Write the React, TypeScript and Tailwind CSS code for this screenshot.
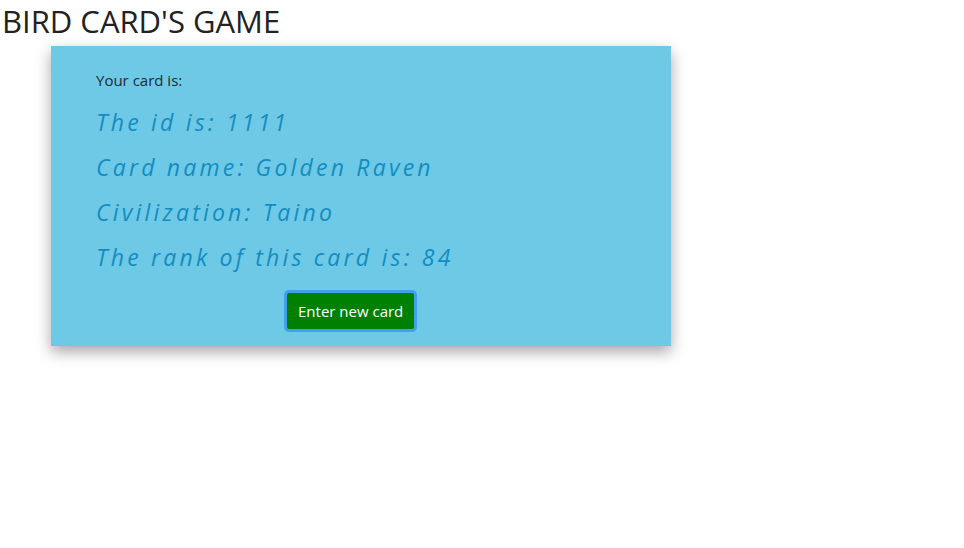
export default function App() {
  const lines = [
    "The id is: 1111",
    "Card name: Golden Raven",
    "Civilization: Taino",
    "The rank of this card is: 84",
  ];

  return (
    <div className="min-h-[548px] bg-white font-['Open_Sans',sans-serif] text-[#222]">
      <h1 className="pl-[2px] text-[31px] leading-[42px] tracking-[0px] text-[#222]">BIRD CARD'S GAME</h1>
      <div className="ml-[51px] mt-[4px] h-[300px] w-[620px] bg-[#6ec9e7] pl-[45px] pt-[22px] shadow-[0_6px_14px_rgba(0,0,0,0.35)]">
        <p className="text-[15px] leading-[24px] text-[#1d2b33]">Your card is:</p>
        <div className="mt-[14px] flex flex-col gap-[12px]">
          {lines.map((l) => (
            <p
              key={l}
              className="text-[23px] italic leading-[33px] tracking-[3.2px] text-[#138dc1]"
            >
              {l}
            </p>
          ))}
        </div>
        <button className="ml-[188px] mt-[16px] h-[42px] rounded-[5px] border-[3px] border-[#3fa0ec] bg-[#008000] px-[11px] text-[15px] text-white">
          Enter new card
        </button>
      </div>
    </div>
  );
}
